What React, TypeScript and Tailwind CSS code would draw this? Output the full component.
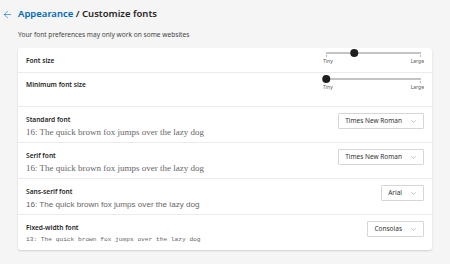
import { ArrowLeft, ChevronDown } from "lucide-react";

const ui = { fontFamily: '"Segoe UI", "Noto Sans", "Open Sans", sans-serif' };

const Slider = ({ pos }: { pos: number }) => (
  <div className="w-[95px] flex flex-col">
    <div className="relative h-[8px] flex items-center">
      <div className="w-full h-[2px] bg-[#c4c4c4]" />
      <div className="absolute left-0 top-[6px] w-px h-[2px] bg-[#bbb]" />
      <div className="absolute right-0 top-[6px] w-px h-[2px] bg-[#bbb]" />
      <div
        className="absolute w-[7.5px] h-[7.5px] rounded-full bg-[#1f1f1f] -translate-x-1/2"
        style={{ left: `${pos}%` }}
      />
    </div>
    <div className="-mx-[3px] flex justify-between text-[5px] leading-[7px] text-[#555] mt-[1px]">
      <span>Tiny</span>
      <span>Large</span>
    </div>
  </div>
);

const Select = ({ value }: { value: string }) => (
  <div className="h-[16px] pl-[6px] pr-[6px] flex items-center gap-[8px] border border-[#d6d6d6] bg-white text-[6.5px] text-[#333] rounded-[1px]">
    <span>{value}</span>
    <ChevronDown size={7} strokeWidth={1.3} className="text-[#555]" />
  </div>
);

const FontRow = ({
  label,
  sample,
  sampleClass,
  value,
}: {
  label: string;
  sample: string;
  sampleClass: string;
  value: string;
}) => (
  <div className="h-[36px] flex items-start justify-between pl-[8px] pr-[8px] pt-[6px] border-t border-[#ebebeb]">
    <div className="flex flex-col pt-[2px]">
      <span className="text-[6.6px] font-semibold text-[#262626] leading-[10px]">{label}</span>
      <span className={sampleClass}>{sample}</span>
    </div>
    <Select value={value} />
  </div>
);

export default function App() {
  return (
    <div className="w-[450px] h-[264px] bg-[#f5f5f5] overflow-hidden" style={ui}>
      <div className="flex items-center h-[28px] pl-[2px]">
        <ArrowLeft size={11} strokeWidth={1.3} className="text-[#0067b8] mr-[5px]" />
        <h1 className="text-[9.5px] font-semibold text-[#262626] leading-none">
          <span className="text-[#0067b8]">Appearance</span> / Customize fonts
        </h1>
      </div>
      <p className="pl-[18px] text-[6.6px] text-[#444] leading-[14px]">
        Your font preferences may only work on some websites
      </p>
      <div className="mt-[6px] ml-[18px] w-[414px] bg-white rounded-[3px] shadow-[0_1px_2px_rgba(0,0,0,0.15)]">
        <div className="h-[24px] flex items-start justify-between pl-[8px] pr-[11px] pt-[1px]">
          <span className="text-[6.6px] font-semibold text-[#262626] mt-[7px]">Font size</span>
          <Slider pos={29.5} />
        </div>
        <div className="h-[34px] flex items-start justify-between pl-[8px] pr-[11px] pt-[2px] border-t border-[#ebebeb]">
          <span className="text-[6.6px] font-semibold text-[#262626] mt-[5px]">Minimum font size</span>
          <Slider pos={0} />
        </div>
        <FontRow
          label="Standard font"
          sample="16: The quick brown fox jumps over the lazy dog"
          sampleClass="mt-[1px] text-[9px] text-[#666] leading-[13px] font-['Liberation_Serif',serif]"
          value="Times New Roman"
        />
        <FontRow
          label="Serif font"
          sample="16: The quick brown fox jumps over the lazy dog"
          sampleClass="mt-[1px] text-[9px] text-[#666] leading-[13px] font-['Liberation_Serif',serif]"
          value="Times New Roman"
        />
        <FontRow
          label="Sans-serif font"
          sample="16: The quick brown fox jumps over the lazy dog"
          sampleClass="mt-[1px] text-[8.1px] text-[#666] leading-[13px] font-['Liberation_Sans',sans-serif]"
          value="Arial"
        />
        <FontRow
          label="Fixed-width font"
          sample="13: The quick brown fox jumps over the lazy dog"
          sampleClass="mt-[1px] text-[6.2px] text-[#666] leading-[12px] font-['Liberation_Mono',monospace]"
          value="Consolas"
        />
      </div>
    </div>
  );
}
